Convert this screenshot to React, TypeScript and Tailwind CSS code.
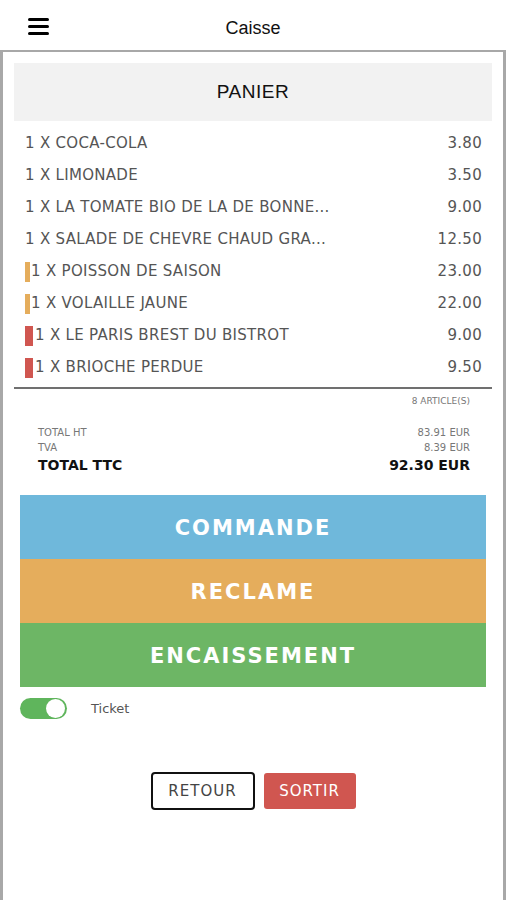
const items = [
  { label: "1 X COCA-COLA", price: "3.80", mark: "" },
  { label: "1 X LIMONADE", price: "3.50", mark: "" },
  { label: "1 X LA TOMATE BIO DE LA DE BONNE...", price: "9.00", mark: "" },
  { label: "1 X SALADE DE CHEVRE CHAUD GRA...", price: "12.50", mark: "" },
  { label: "1 X POISSON DE SAISON", price: "23.00", mark: "orange" },
  { label: "1 X VOLAILLE JAUNE", price: "22.00", mark: "orange" },
  { label: "1 X LE PARIS BREST DU BISTROT", price: "9.00", mark: "red" },
  { label: "1 X BRIOCHE PERDUE", price: "9.50", mark: "red" },
];

const App = () => {
  return (
    <div className="w-[506px] h-[900px] bg-white flex flex-col overflow-hidden font-['DejaVu_Sans',sans-serif]">
      {/* Header */}
      <div className="h-[50px] flex items-center relative shrink-0">
        <div className="absolute left-[28px] top-[18px] flex flex-col gap-[4px]">
          <span className="block w-[21px] h-[3px] bg-black rounded-sm" />
          <span className="block w-[21px] h-[3px] bg-black rounded-sm" />
          <span className="block w-[21px] h-[3px] bg-black rounded-sm" />
        </div>
        <h1 className="w-full text-center text-[18px] text-[#111] font-medium font-['Liberation_Sans',sans-serif] pt-[6px]">
          Caisse
        </h1>
      </div>

      {/* Card */}
      <div className="flex-1 border-t-2 border-x-[3px] border-[#a8a8a8] px-[11px] pt-[11px]">
        <div className="h-[58px] bg-[#f2f2f2] flex items-center justify-center text-[19px] text-[#111] font-['Liberation_Sans',sans-serif] tracking-[0.5px]">
          PANIER
        </div>

        {/* Items */}
        <div className="pt-[6px] pb-[4px] border-b-2 border-[#707070]">
          {items.map((it) => (
            <div
              key={it.label}
              className="h-[32px] flex items-center justify-between pl-[11px] pr-[10px] pt-[1px] text-[15px] tracking-[0.3px] text-[#555]"
            >
              <div className="flex items-center">
                {it.mark === "orange" && (
                  <span className="block w-[5px] h-[20px] bg-[#e5ad5c] mr-[1px]" />
                )}
                {it.mark === "red" && (
                  <span className="block w-[8px] h-[20px] bg-[#d05650] mr-[2px]" />
                )}
                <span>{it.label}</span>
              </div>
              <span>{it.price}</span>
            </div>
          ))}
        </div>

        {/* Totals */}
        <div className="pl-[24px] pr-[22px]">
          <div className="text-right text-[9px] text-[#777] pt-[6px] h-[24px]">8 ARTICLE(S)</div>
          <div className="pt-[12px] flex justify-between text-[10px] text-[#777] leading-[15px]">
            <span>TOTAL HT</span>
            <span>83.91 EUR</span>
          </div>
          <div className="flex justify-between text-[10px] text-[#777] leading-[15px]">
            <span>TVA</span>
            <span>8.39 EUR</span>
          </div>
          <div className="flex justify-between text-[14px] font-bold text-[#111] leading-[20px]">
            <span>TOTAL TTC</span>
            <span>92.30 EUR</span>
          </div>
        </div>

        {/* Action buttons */}
        <div className="mt-[20px] mx-[6px] flex flex-col text-white font-bold text-[21px] tracking-[2px]">
          <button className="h-[64px] pt-[3px] bg-[#6fb8db]">COMMANDE</button>
          <button className="h-[64px] pt-[3px] bg-[#e5ad5c]">RECLAME</button>
          <button className="h-[64px] pt-[3px] bg-[#6db665]">ENCAISSEMENT</button>
        </div>

        {/* Ticket toggle */}
        <div className="mt-[11px] mx-[6px] flex items-center gap-[24px]">
          <div className="w-[47px] h-[21px] rounded-full bg-[#5fb55c] flex items-center justify-end pr-[2px]">
            <span className="block w-[19px] h-[19px] rounded-full bg-white" />
          </div>
          <span className="text-[13px] text-[#555]">Ticket</span>
        </div>

        {/* Bottom buttons */}
        <div className="mt-[53px] flex justify-center items-center gap-[9px] text-[15px] tracking-[1px]">
          <button className="w-[104px] h-[38px] border-2 border-[#111] rounded-[4px] text-[#444]">
            RETOUR
          </button>
          <button className="w-[92px] h-[36px] rounded-[3px] bg-[#d05650] text-white">
            SORTIR
          </button>
        </div>
      </div>
    </div>
  );
};

export default App;
